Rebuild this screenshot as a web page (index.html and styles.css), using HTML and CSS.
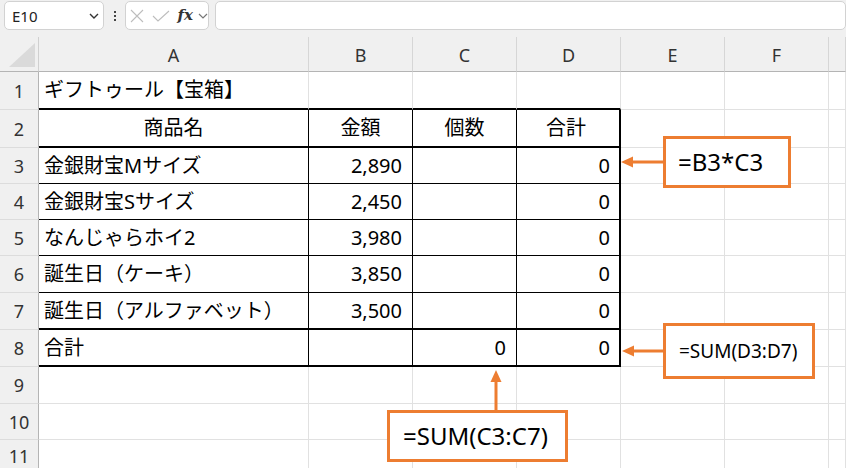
FILE: index.html
```html
<!DOCTYPE html>
<html lang="ja">
<head>
<meta charset="utf-8">
<title>Sheet</title>
<link rel="stylesheet" href="styles.css">
</head>
<body>
<div class="app">
  <div class="toolbar">
    <div class="namebox">
      <span class="name">E10</span>
      <svg class="chev" width="10" height="6" viewBox="0 0 10 6"><path d="M1 1 L5 5 L9 1" fill="none" stroke="#333" stroke-width="1.4"/></svg>
    </div>
    <div class="dots"><span></span><span></span><span></span></div>
    <div class="fxbox">
      <svg class="ico ico-x" width="14" height="14" viewBox="0 0 14 14"><path d="M1 1 L13 13 M13 1 L1 13" fill="none" stroke="#bdbdbd" stroke-width="1.1"/></svg>
      <svg class="ico ico-v" width="18" height="12" viewBox="0 0 18 12"><path d="M1 6 L6 11 L17 1" fill="none" stroke="#bdbdbd" stroke-width="1.1"/></svg>
      <span class="fx">fx</span>
      <svg class="chev2" width="10" height="6" viewBox="0 0 10 6"><path d="M1 1 L5 5 L9 1" fill="none" stroke="#777" stroke-width="1.2"/></svg>
    </div>
    <div class="formula"></div>
  </div>

  <div class="sheet">
    <!-- header -->
    <div class="corner"><div class="tri"></div></div>
    <div class="ch">A</div><div class="ch">B</div><div class="ch">C</div><div class="ch">D</div><div class="ch">E</div><div class="ch">F</div><div class="ch"></div>

    <!-- row 1 -->
    <div class="rh">1</div>
    <div class="c kt">ギフトゥール【宝箱】</div><div class="c kt"></div><div class="c kt"></div><div class="c kt"></div><div class="c"></div><div class="c"></div><div class="c"></div>

    <!-- row 2 -->
    <div class="rh">2</div>
    <div class="c k kb ctr">商品名</div><div class="c k kb ctr">金額</div><div class="c k kb ctr">個数</div><div class="c k kb kr ctr">合計</div><div class="c"></div><div class="c"></div><div class="c"></div>

    <!-- row 3 -->
    <div class="rh">3</div>
    <div class="c k">金銀財宝Mサイズ</div><div class="c k num">2,890</div><div class="c k num"></div><div class="c k kr num">0</div><div class="c"></div><div class="c"></div><div class="c"></div>

    <!-- row 4 -->
    <div class="rh">4</div>
    <div class="c k">金銀財宝Sサイズ</div><div class="c k num">2,450</div><div class="c k num"></div><div class="c k kr num">0</div><div class="c"></div><div class="c"></div><div class="c"></div>

    <!-- row 5 -->
    <div class="rh">5</div>
    <div class="c k">なんじゃらホイ2</div><div class="c k num">3,980</div><div class="c k num"></div><div class="c k kr num">0</div><div class="c"></div><div class="c"></div><div class="c"></div>

    <!-- row 6 -->
    <div class="rh">6</div>
    <div class="c k">誕生日（ケーキ）</div><div class="c k num">3,850</div><div class="c k num"></div><div class="c k kr num">0</div><div class="c"></div><div class="c"></div><div class="c"></div>

    <!-- row 7 -->
    <div class="rh">7</div>
    <div class="c k kb">誕生日（アルファベット）</div><div class="c k kb num">3,500</div><div class="c k kb num"></div><div class="c k kb kr num">0</div><div class="c"></div><div class="c"></div><div class="c"></div>

    <!-- row 8 -->
    <div class="rh">8</div>
    <div class="c k kb">合計</div><div class="c k kb num"></div><div class="c k kb num">0</div><div class="c k kb kr num">0</div><div class="c"></div><div class="c"></div><div class="c"></div>

    <!-- row 9 -->
    <div class="rh">9</div>
    <div class="c"></div><div class="c"></div><div class="c"></div><div class="c"></div><div class="c"></div><div class="c"></div><div class="c"></div>

    <!-- row 10 -->
    <div class="rh">10</div>
    <div class="c"></div><div class="c"></div><div class="c"></div><div class="c"></div><div class="c"></div><div class="c"></div><div class="c"></div>

    <!-- row 11 -->
    <div class="rh rh-last">11</div>
    <div class="c"></div><div class="c"></div><div class="c"></div><div class="c"></div><div class="c"></div><div class="c"></div><div class="c"></div>
  </div>

  <!-- annotations overlay -->
  <svg class="arrows" width="846" height="468" viewBox="0 0 846 468">
    <g fill="#ED7D31" stroke="#ED7D31">
      <line x1="664" y1="162" x2="631" y2="162" stroke-width="3"/>
      <polygon points="621,162 633,156.5 633,167.5" stroke="none"/>
      <line x1="664" y1="351" x2="632" y2="351" stroke-width="3"/>
      <polygon points="622,351 634,345.5 634,356.5" stroke="none"/>
      <line x1="496" y1="411" x2="496" y2="380" stroke-width="3"/>
      <polygon points="496,370 490.5,382 501.5,382" stroke="none"/>
    </g>
  </svg>
  <div class="note n1">=B3*C3</div>
  <div class="note n2">=SUM(D3:D7)</div>
  <div class="note n3">=SUM(C3:C7)</div>
</div>
</body>
</html>
```

FILE: styles.css
```css
* { box-sizing: border-box; }
html, body { margin: 0; padding: 0; }
body {
  width: 846px;
  height: 468px;
  overflow: hidden;
  background: #fff;
  font-family: "Noto Sans", "Noto Sans CJK JP", sans-serif;
}
.app {
  position: relative;
  width: 846px;
  height: 468px;
  overflow: hidden;
  display: flex;
  flex-direction: column;
}

/* toolbar */
.toolbar {
  height: 37px;
  flex: none;
  background: #f0f0f0;
  display: flex;
  align-items: flex-start;
  padding: 1px 0 0 4px;
}
.namebox {
  width: 101px;
  height: 29px;
  background: #fff;
  border: 1px solid #d2d2d2;
  border-radius: 5px;
  display: flex;
  align-items: center;
  justify-content: space-between;
  padding: 0 4px 0 7px;
}
.name {
  font-family: "Noto Sans", sans-serif;
  font-size: 15px;
  color: #222;
}
.dots {
  width: 22px;
  height: 29px;
  display: flex;
  flex-direction: column;
  align-items: center;
  justify-content: center;
  gap: 2px;
}
.dots span {
  width: 2px;
  height: 2px;
  background: #444;
}
.fxbox {
  width: 84px;
  height: 29px;
  background: #fff;
  border: 1px solid #d2d2d2;
  border-radius: 5px;
  display: flex;
  align-items: center;
  padding: 0 0 0 4px;
}
.ico { flex: none; }
.ico-x { margin-right: 8px; }
.ico-v { margin-right: 7px; }
.fx {
  font-family: "DejaVu Serif", "Liberation Serif", serif;
  font-style: italic;
  font-weight: bold;
  font-size: 15px;
  color: #333;
  margin: 0 5px 0 0;
  line-height: 1;
}
.chev2 { flex: none; }
.formula {
  margin-left: 6px;
  width: 640px;
  height: 29px;
  background: #fff;
  border: 1px solid #d2d2d2;
  border-radius: 5px;
}

/* sheet grid */
.sheet {
  flex: none;
  display: grid;
  grid-template-columns: 39px 270px 104px 104px 104px 104px 104px 1fr;
  grid-template-rows: 35px 38px 38px 36px 36px 36px 37px 37px 37px 37px 36px 37px;
}
.corner {
  background: #f0f0f0;
  border-right: 1px solid #d0d0d0;
  border-bottom: 1px solid #b4b4b4;
  display: flex;
  justify-content: flex-end;
  align-items: flex-end;
  padding: 0 3px 4px 0;
}
.tri {
  width: 26px;
  height: 24px;
  background: #dadada;
  clip-path: polygon(100% 0, 100% 100%, 0 100%);
}
.ch {
  background: #f0f0f0;
  border-right: 1px solid #d6d6d6;
  border-bottom: 1px solid #b4b4b4;
  display: flex;
  align-items: center;
  justify-content: center;
  font-family: "Noto Sans", sans-serif;
  font-size: 18px;
  color: #333;
  padding-top: 1px;
}
.rh {
  background: #f0f0f0;
  border-right: 1px solid #b4b4b4;
  border-bottom: 1px solid #dcdcdc;
  display: flex;
  align-items: center;
  justify-content: center;
  font-family: "Noto Sans", sans-serif;
  font-size: 18px;
  color: #333;
}
.rh-last { align-items: flex-start; padding-top: 4px; }
.c {
  border-right: 1px solid #e1e1e1;
  border-bottom: 1px solid #e1e1e1;
  display: flex;
  align-items: center;
  padding: 0 5px;
  font-size: 20px;
  line-height: 1;
  color: #000;
  white-space: nowrap;
}
.ctr { justify-content: center; }
.num { justify-content: flex-end; padding-right: 10px; }
.k { border-right-color: #000; border-bottom-color: #000; }
.kt { border-bottom: 2px solid #000; }
.kb { border-bottom: 2px solid #000; }
.kr { border-right: 2px solid #000; padding-right: 9px; }

/* annotations */
.arrows {
  position: absolute;
  left: 0;
  top: 0;
  pointer-events: none;
}
.note {
  position: absolute;
  background: #fff;
  border: 3px solid #ED7D31;
  display: flex;
  align-items: center;
  font-family: "Noto Sans", sans-serif;
  color: #000;
  line-height: 1;
  white-space: nowrap;
}
.n1 { left: 663px; top: 136px; width: 128px; height: 52px; padding-left: 12px; font-size: 24px; }
.n2 { left: 663px; top: 323px; width: 152px; height: 56px; padding-left: 13px; font-size: 19px; }
.n3 { left: 387px; top: 410px; width: 181px; height: 52px; padding-left: 13px; font-size: 24px; }
```
